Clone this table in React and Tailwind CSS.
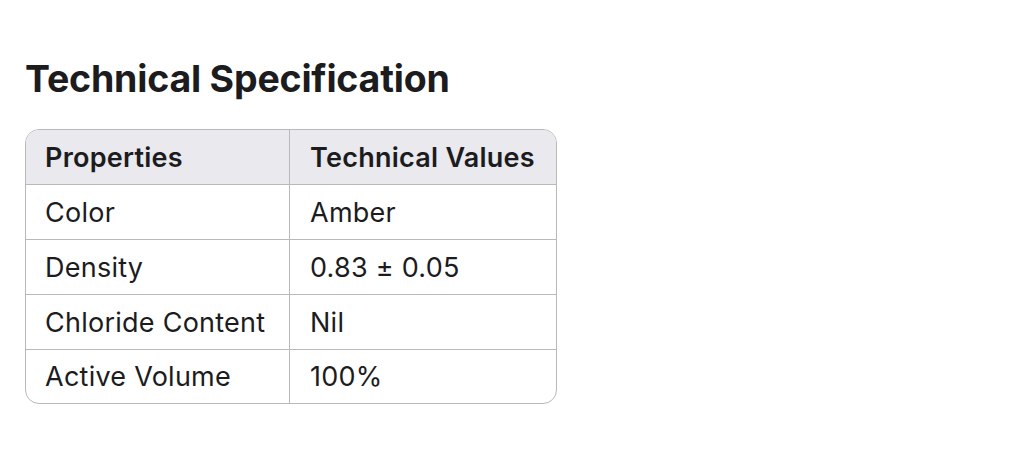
const rows = [
  ['Color', 'Amber'],
  ['Density', '0.83 ± 0.05'],
  ['Chloride Content', 'Nil'],
  ['Active Volume', '100%'],
];

export default function App() {
  return (
    <div
      className="w-[1024px] h-[462px] bg-white px-[25px] pt-[56px] text-[#1c1c1e]"
      style={{ fontFamily: 'Inter, "Noto Sans", sans-serif' }}
    >
      <h1 className="text-[37.5px] font-bold leading-[46px] tracking-[-0.2px]">Technical Specification</h1>
      <div className="mt-[27px] w-[532px] border border-[#b9b9bd] rounded-[14px] overflow-hidden tracking-[0.25px]">
        <div className="grid grid-cols-[264px_1fr] bg-[#e9e9ee] h-[55px] border-b border-[#b9b9bd]">
          <div className="flex items-center pl-[19px] pt-[2px] text-[27px] font-semibold border-r border-[#b9b9bd]">
            Properties
          </div>
          <div className="flex items-center pl-[20px] pt-[2px] text-[27px] font-semibold">Technical Values</div>
        </div>
        {rows.map(([k, v], i) => {
          const last = i === rows.length - 1;
          return (
            <div
              key={k}
              className={`grid grid-cols-[264px_1fr] ${last ? 'h-[53px]' : 'h-[55px] border-b border-[#b9b9bd]'}`}
            >
              <div className="flex items-center pl-[19px] pt-[2px] text-[27px] border-r border-[#b9b9bd]">{k}</div>
              <div className="flex items-center pl-[20px] pt-[2px] text-[27px]">{v}</div>
            </div>
          );
        })}
      </div>
    </div>
  );
}
